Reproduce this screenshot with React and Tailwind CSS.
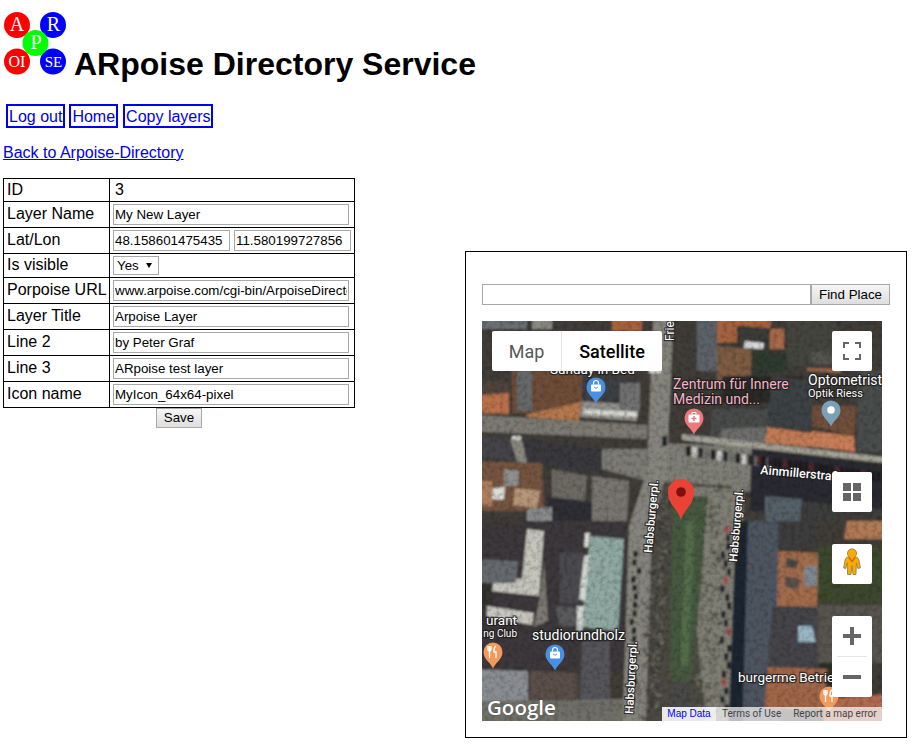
const rows = [
  ['Layer Name', 'My New Layer', 'h-[26px]'],
];

const textRows = [
  ['Porpoise URL', 'www.arpoise.com/cgi-bin/ArpoiseDirectory/arpoise'],
  ['Layer Title', 'Arpoise Layer'],
  ['Line 2', 'by Peter Graf'],
  ['Line 3', 'ARpoise test layer'],
  ['Icon name', 'MyIcon_64x64-pixel'],
];

const Logo = () => (
  <svg width="70" height="76" viewBox="0 0 70 76" className="shrink-0" fontFamily="'Liberation Serif', serif" fill="#fff" textAnchor="middle">
    <circle cx="17" cy="25" r="13" fill="#ff0000" />
    <circle cx="53" cy="25" r="13" fill="#0000ff" />
    <circle cx="17" cy="61.5" r="13" fill="#ff0000" />
    <circle cx="53" cy="61.5" r="13" fill="#0000ff" />
    <circle cx="35.5" cy="43" r="13" fill="#00ff00" />
    <text x="17" y="30.5" fontSize="20">A</text>
    <text x="53.5" y="30.5" fontSize="20">R</text>
    <text x="36" y="48.5" fontSize="20">P</text>
    <text x="17" y="67" fontSize="16">OI</text>
    <text x="53.5" y="67" fontSize="15">SE</text>
  </svg>
);

const NavLink = ({ className = '', children }) => (
  <a href="#" className={`block h-[24px] border-2 border-[#0000ee] px-[1px] text-[16px] leading-[22px] whitespace-nowrap text-[#0000ee] ${className}`}>
    {children}
  </a>
);

const Field = ({ value, className = 'w-[236px]' }) => (
  <input
    readOnly
    value={value}
    className={`block h-[21px] border border-[#a9a9a9] bg-white px-[1px] text-[13.33px] text-black outline-none ${className}`}
  />
);

const Label = ({ className = 'pb-[2px]', children }) => (
  <td className={`w-[106px] border border-black pl-[3px] pr-0 pt-0 align-middle text-[16px] leading-[18px] whitespace-nowrap text-black ${className}`}>{children}</td>
);

const Cell = ({ children }) => (
  <td className="border border-black py-0 pl-[3px] pr-[2px] align-middle">{children}</td>
);

// satellite picture, coordinates are map pixels (400x400)
const blocks = [
  ['-20,-20 420,-20 420,420 -20,420', '#3f3d39'],
  ['-20,-20 45,-20 45,8 -20,8', '#6b7075'],
  ['45,-20 130,-20 130,18 45,18', '#3f3d3a'],
  ['130,-20 160,-20 160,10 130,10', '#a8603e'],
  ['50,-20 70,-20 70,8 50,8', '#8b8a80'],
  ['-20,60 27,60 27,75 -20,75', '#4f443c'],
  ['-20,75 27,72 27,93 -20,92', '#b8714c'],
  ['30,48 100,50 100,82 45,92 30,92', '#6e4d38'],
  ['35,50 50,50 50,90 35,90', '#66696a'],
  ['45,93 100,81 97,100 45,96', '#b5784f'],
  ['100,55 157,60 157,80 100,80', '#3d4144'],
  ['100,80 157,84 155,100 98,96', '#8f8f8c'],
  ['102,88 155,91 155,96 102,93', '#d6d6d0'],
  ['138,62 158,62 158,90 138,88', '#70716f'],
  ['-20,93 165,104 165,118 -20,110', '#7b7a72'],
  ['-20,112 28,118 35,140 -20,135', '#45454a'],
  ['28,118 44,120 46,143 36,142', '#8a8a80'],
  ['40,118 120,128 122,152 45,142', '#38383c'],
  ['120,128 165,128 165,160 120,148', '#7c7b74'],
  ['-20,140 60,142 62,190 -20,190', '#75543f'],
  ['22,148 37,150 36,165 22,165', '#8f8f8f'],
  ['33,167 58,170 55,187 31,184', '#b69678'],
  ['11,167 23,166 22,179 10,178', '#dcdcd6'],
  ['-20,160 10,160 10,185 -20,185', '#b08060'],
  ['70,148 105,155 103,180 70,176', '#6d6a64'],
  ['110,155 147,160 145,200 110,200', '#77746e'],
  ['65,176 110,182 110,200 65,200', '#2d2f36'],
  ['45,188 70,186 70,200 45,200', '#888a8c'],
  // top right
  ['215,-20 235,-20 235,50 215,50', '#5b6468'],
  ['235,-20 290,-20 288,20 235,22', '#a5623f'],
  ['255,5 300,8 300,30 255,30', '#3a3a38'],
  ['263,20 282,22 281,28 262,27', '#dcdcdc'],
  ['288,8 302,8 302,28 288,28', '#a86a48'],
  ['235,25 270,28 268,65 235,62', '#7d5b42'],
  ['270,30 305,32 305,50 270,55', '#2f3a2d'],
  ['305,-20 355,-20 355,45 305,45', '#45443f'],
  ['330,30 360,33 360,45 330,42', '#54544f'],
  ['325,47 360,48 358,52 325,50', '#a06848'],
  ['240,55 320,55 320,82 240,82', '#2c2a28'],
  ['230,88 290,88 286,112 228,118', '#4a4c4c'],
  ['240,108 288,106 285,122 236,120', '#6d6e6c'],
  ['290,55 330,60 330,110 285,105', '#3e4244'],
  ['330,85 375,85 372,115 330,105', '#70503a'],
  ['285,106 330,112 326,126 283,122', '#c07a55'],
  ['330,110 372,115 373,131 325,125', '#c77e58'],
  ['375,50 420,50 420,132 375,130', '#4a4d4c'],
  ['170,122 270,125 268,170 165,170', '#7e7e76'],
  ['270,128 420,146 420,195 268,190', '#2b2c30'],
  ['283,175 320,178 318,200 283,200', '#556068'],
  ['320,180 420,190 420,200 320,200', '#3c3c3a'],
  // bottom left
  ['-20,200 146,200 146,350 -20,350', '#3c393b'],
  ['45,208 62,210 57,275 10,270 12,256 40,258', '#c5c5bc'],
  ['-20,238 36,240 34,262 -20,262', '#666a6e'],
  ['-20,262 10,262 10,285 -20,285', '#33302e'],
  ['5,285 52,292 50,304 5,296', '#c8c8c0'],
  ['58,275 62,240 66,300 52,306', '#7d7a72'],
  ['78,232 104,232 104,282 78,282', '#4b4b50'],
  ['73,285 100,287 100,305 78,305', '#5a5a5c'],
  ['108,215 142,218 136,310 100,306', '#8fa9a2'],
  ['102,235 108,234 103,280 97,278', '#d2d6d0'],
  ['103,212 108,212 106,226 102,226', '#e0e0da'],
  ['95,285 102,285 100,310 95,310', '#d2d6d0'],
  ['100,320 128,320 128,382 98,380', '#55545a'],
  ['-20,348 46,350 46,380 -20,380', '#8a8e92'],
  ['48,350 95,352 95,378 48,378', '#5c5048'],
  ['-20,380 146,378 146,420 -20,420', '#6f6f69'],
  // green, trees and the two roads
  ['168,160 250,165 244,420 150,420', '#4c4a43'],
  ['172,-20 192,-20 185,150 170,205 163,420 140,420 147,205 165,150', '#86857d'],
  ['200,165 262,168 254,420 226,420', '#7f7e73'],
  ['190,175 226,175 220,250 210,360 188,360', '#46593f'],
  ['204,200 213,200 206,345 198,345', '#526c49'],
  ['188,362 210,362 210,395 188,395', '#4a4a44'],
  // bottom right
  ['254,200 268,200 262,420 246,420', '#1f2731'],
  ['266,200 298,200 296,420 260,420', '#4d5560'],
  ['296,200 335,200 335,228 296,228', '#3e3d3c'],
  ['296,230 337,232 335,286 295,285', '#a06c4c'],
  ['304,236 316,240 314,248 304,246', '#4a4846'],
  ['303,255 318,258 316,268 303,266', '#58504a'],
  ['322,245 335,245 335,265 322,265', '#7f8890'],
  ['290,286 336,286 336,346 286,346', '#45454a'],
  ['316,305 330,305 334,321 316,321', '#9ab5c4'],
  ['336,225 420,225 420,282 336,282', '#3c4a2d'],
  ['365,200 420,200 420,218 362,218', '#b07a55'],
  ['336,284 420,284 420,342 336,342', '#595550'],
  ['336,342 362,342 362,372 336,372', '#2c3226'],
  ['286,346 345,348 342,388 282,388', '#a0664a'],
  ['342,378 420,372 420,420 342,420', '#b06a50'],
];

// cheap seeded random so the specks stay put between renders
let seed = 7;
const rnd = () => {
  seed = (seed * 16807) % 2147483647;
  return seed / 2147483647;
};

const treeStrokes = Array.from({ length: 520 }, () => {
  const y = 165 + rnd() * 235;
  const left = rnd() > 0.5;
  const x = left ? 172 + rnd() * 20 - (y - 165) * 0.08 : 224 + rnd() * 18 - (y - 165) * 0.04;
  return { x, y, dx: (rnd() - 0.5) * 12, dy: (rnd() - 0.5) * 12, c: rnd() > 0.5 ? '#26211d' : '#8a8a7e' };
});

const cars = [
  ...Array.from({ length: 14 }, (_, i) => ({ x: 204 + i * 6.2, y: 125 + i * 0.9, w: 4.5, h: 10, c: ['#1d1d1f', '#c8c8c8', '#2b2b33', '#6a6a6a'][i % 4] })),
  ...Array.from({ length: 24 }, (_, i) => ({ x: 275 + i * 5.2, y: 135 + i * 0.7, w: 4, h: 9, c: i % 5 === 0 ? '#55272a' : '#1a1b20' })),
  ...Array.from({ length: 22 }, (_, i) => ({ x: 238 + rnd() * 8, y: 205 + i * 8.5, w: 4, h: 7, c: i % 6 === 0 ? '#a84a4a' : '#24242a' })),
  ...Array.from({ length: 18 }, (_, i) => ({ x: 150 + rnd() * 6 - i * 0.3, y: 230 + i * 8.5, w: 4, h: 6, c: '#1f1f24' })),
  { x: 167, y: 46, w: 12, h: 6, c: '#dcdcdc' },
  { x: 180, y: 115, w: 5, h: 10, c: '#22252a' },
  { x: 30, y: 115, w: 9, h: 4, c: '#d0d0c8' },
];

const Pin = ({ x, y, fill, children }) => (
  <g transform={`translate(${x} ${y})`}>
    <path d="M0 16.5C-2 11-9.5 7.5-9.5 0a9.5 9.5 0 0 1 19 0C9.5 7.5 2 11 0 16.5z" fill={fill} />
    {children}
  </g>
);

const ShopGlyph = () => (
  <g>
    <rect x="-5" y="-2.5" width="10" height="7" rx="1" fill="#fff" />
    <path d="M-2.5-2.5v-1.5a2.5 2.5 0 0 1 5 0v1.5" fill="none" stroke="#fff" strokeWidth="1.2" />
    <path d="M-2 0q2 2.5 4 0" fill="none" stroke="#4a90e2" strokeWidth="0.9" />
  </g>
);

const ForkGlyph = () => (
  <path d="M-3.5-6v4.5M-5-6v3.5q0 1.5 1.5 1.5t1.5-1.5V-6M-3.5-1V6M3-6q-2 1-2 5v1h2V6" fill="none" stroke="#fff" strokeWidth="1.3" />
);

const Label2 = ({ x, y, size = 13, fill = '#fff', weight = 400, rotate, anchor, children }) => (
  <text
    x={x}
    y={y}
    fontSize={size}
    fill={fill}
    fontWeight={weight}
    textAnchor={anchor}
    stroke="#1a1a1a"
    strokeWidth="2.4"
    strokeOpacity="0.75"
    paintOrder="stroke"
    transform={rotate ? `rotate(${rotate} ${x} ${y})` : undefined}
  >
    {children}
  </text>
);

const Satellite = () => (
  <svg width="400" height="400" viewBox="0 0 400 400" className="block" fontFamily="Roboto, sans-serif">
    <defs>
      <filter id="soft">
        <feGaussianBlur stdDeviation="0.9" />
      </filter>
      <filter id="grain" x="0" y="0" width="100%" height="100%">
        <feTurbulence type="fractalNoise" baseFrequency="0.22" numOctaves="3" seed="4" />
        <feColorMatrix values="0 0 0 0 0  0 0 0 0 0  0 0 0 0 0  0 0 0 -2.2 1.3" />
      </filter>
    </defs>
    <g filter="url(#soft)">
      {blocks.map(([points, fill], i) => (
        <polygon key={i} points={points} fill={fill} />
      ))}
      {treeStrokes.map((t, i) => (
        <line key={i} x1={t.x} y1={t.y} x2={t.x + t.dx} y2={t.y + t.dy} stroke={t.c} strokeWidth="0.8" />
      ))}
      {cars.map((c, i) => (
        <rect key={i} x={c.x} y={c.y} width={c.w} height={c.h} fill={c.c} />
      ))}
      <polygon points="200,113 420,138 420,144 200,119" fill="#a3a297" />
    </g>
    <rect width="400" height="400" filter="url(#grain)" opacity="0.2" />

    <Label2 x={68} y={53} size={13.5}>Sunday in Bed</Label2>
    <Label2 x={192} y={20} size={12} rotate={-90}>Frie</Label2>
    <Label2 x={191} y={68} size={14} fill="#f5b5c8">Zentrum für Innere</Label2>
    <Label2 x={191} y={83} size={14} fill="#f5b5c8">Medizin und...</Label2>
    <Label2 x={326} y={63.5} size={14}>Optometrist</Label2>
    <Label2 x={326} y={76} size={11}>Optik Riess</Label2>
    <Label2 x={278} y={153} size={12.5} weight={500} rotate={5}>Ainmillerstraße</Label2>
    <Label2 x={170} y={232} size={11.5} weight={500} rotate={-85}>Habsburgerpl.</Label2>
    <Label2 x={255} y={241} size={11.5} weight={500} rotate={-85}>Habsburgerpl.</Label2>
    <Label2 x={151} y={393} size={11.5} weight={500} rotate={-87}>Habsburgerpl.</Label2>
    <Label2 x={35} y={304} size={13.5} anchor="end">urant</Label2>
    <Label2 x={35} y={316} size={10} anchor="end">ng Club</Label2>
    <Label2 x={50} y={319} size={14}>studiorundholz</Label2>
    <Label2 x={256} y={361} size={13.5}>burgerme Betrieb</Label2>

    <Pin x={114} y={66} fill="#4a90e2"><ShopGlyph /></Pin>
    <Pin x={73} y={333} fill="#4a90e2"><ShopGlyph /></Pin>
    <Pin x={212} y={97} fill="#f0787d">
      <rect x="-5.5" y="-3.5" width="11" height="8" rx="1" fill="#fff" />
      <path d="M-2-3.5v-2h4v2" fill="none" stroke="#fff" />
      <path d="M-2.5 .5h5M0-2v5" stroke="#f0787d" strokeWidth="1.5" />
    </Pin>
    <Pin x={349} y={89} fill="#7ba0b5"><circle r="3.8" fill="#fff" /></Pin>
    <Pin x={11} y={331} fill="#f29a5c"><ForkGlyph /></Pin>
    <Pin x={347} y={375} fill="#f29a5c"><ForkGlyph /></Pin>

    {/* marker */}
    <path d="M199 199C196 188 186 184 186 171a13 13 0 0 1 26 0C212 184 202 188 199 199z" fill="#ea4335" />
    <circle cx="199" cy="171" r="4.8" fill="#7e0f10" />

    <text x="5" y="394" fontSize="20.5" fontWeight="600" fontFamily="'Open Sans', sans-serif" fill="#fff" stroke="#333" strokeOpacity="0.3" strokeWidth="1" paintOrder="stroke">Google</text>
  </svg>
);

const Control = ({ className, children }) => (
  <div className={`absolute left-[350px] flex w-[40px] items-center justify-center rounded-[2px] bg-white ${className}`}>{children}</div>
);

const MapView = () => (
  <div className="relative h-[400px] w-[400px] overflow-hidden font-['Roboto',sans-serif]">
    <Satellite />

    <div className="absolute left-[10px] top-[10px] flex h-[40px] w-[170px] items-center rounded-[2px] bg-white text-[18px]">
      <div className="flex h-full w-[70px] items-center justify-center border-r border-[#e6e6e6] text-[#565656]">Map</div>
      <div className="flex h-full flex-1 items-center justify-center font-medium text-black">Satellite</div>
    </div>

    <Control className="top-[10px] h-[40px]">
      <svg width="18" height="18" viewBox="0 0 18 18" fill="none" stroke="#666" strokeWidth="2">
        <path d="M1 6V1h5M12 1h5v5M17 12v5h-5M6 17H1v-5" />
      </svg>
    </Control>

    <Control className="top-[151px] h-[40px]">
      <svg width="18" height="18" viewBox="0 0 18 18" fill="#666">
        <rect x="0" y="0" width="8" height="8" />
        <rect x="10" y="0" width="8" height="8" />
        <rect x="0" y="10" width="8" height="8" />
        <rect x="10" y="10" width="8" height="8" />
      </svg>
    </Control>

    <Control className="top-[223px] h-[40px]">
      <svg width="18" height="32" viewBox="0 0 18 32">
        <path d="M9 .8a4.6 4.6 0 0 1 3.2 7.9c2.3.4 3.4 1.6 3.8 3.6l1.4 7.6-2.6.6-1.4-5.6-.4 11.600H10l-1-9-1 9H4.600l-.4-11.600-1.400 5.600-2.200-.6 1.400-7.600c.4-2 1.500-3.200 3.800-3.600A4.600 4.600 0 0 1 9 .8z" fill="#f9ab00" stroke="#8c7a4a" strokeWidth="0.8" />
        <path d="M5.800 9.200 9 13.500l3.200-4.300" fill="none" stroke="#d9641e" strokeWidth="1.600" />
      </svg>
    </Control>

    <div className="absolute left-[350px] top-[295px] flex h-[81px] w-[40px] flex-col items-center rounded-[2px] bg-white">
      <div className="flex h-[40px] items-center justify-center">
        <svg width="18" height="18" viewBox="0 0 18 18" fill="#666">
          <path d="M7 0h4v7h7v4h-7v7H7v-7H0V7h7z" />
        </svg>
      </div>
      <div className="h-px w-[30px] bg-[#e6e6e6]" />
      <div className="flex h-[40px] items-center justify-center">
        <svg width="18" height="4" viewBox="0 0 18 4" fill="#666">
          <rect width="18" height="4" />
        </svg>
      </div>
    </div>

    <div className="absolute bottom-0 right-0 flex h-[14px] w-[220px] items-center bg-white/70 text-[10px] leading-none text-[#444]">
      <span className="flex h-full w-[54px] items-center justify-center bg-white/60 font-['Liberation_Sans',sans-serif] text-[#0000ff]">Map Data</span>
      <span className="ml-[6px]">Terms of Use</span>
      <span className="ml-[12px]">Report a map error</span>
    </div>
  </div>
);

export default function App() {
  return (
    <div className="flex min-h-[753px] items-start bg-white font-['Liberation_Sans',sans-serif] text-black">
      <div className="w-[465px] shrink-0">
        <div className="flex h-[76px] items-end">
          <Logo />
          <h1 className="-mb-[7px] ml-[4px] text-[32px] font-bold leading-[37px] whitespace-nowrap">ARpoise Directory Service</h1>
        </div>

        <div className="ml-[6px] mt-[28px] flex gap-[4px]">
          <NavLink>Log out</NavLink>
          <NavLink>Home</NavLink>
          <NavLink className="ml-px w-[90px]">Copy layers</NavLink>
        </div>

        <div className="ml-[3px] mt-[15px] text-[16px] leading-[20px]">
          <a href="#" className="text-[#0000ee] underline">Back to Arpoise-Directory</a>
        </div>

        <table className="ml-[3px] mt-[15px] w-[352px] table-fixed border-collapse">
          <tbody>
            <tr className="h-[23px]">
              <Label className="pb-0">ID</Label>
              <td className="border border-black py-0 pl-[5px] pr-[3px] text-[16px] leading-[18px]">3</td>
            </tr>
            {rows.map(([label, value, height]) => (
              <tr key={label} className={height}>
                <Label>{label}</Label>
                <Cell><Field value={value} /></Cell>
              </tr>
            ))}
            <tr className="h-[26px]">
              <Label>Lat/Lon</Label>
              <Cell>
                <div className="flex gap-[4px]">
                  <Field value="48.158601475435" className="w-[117px]" />
                  <Field value="11.580199727856" className="w-[117px]" />
                </div>
              </Cell>
            </tr>
            <tr className="h-[24px]">
              <Label>Is visible</Label>
              <Cell>
                <div className="relative h-[19px] w-[46px]">
                  <select className="block h-full w-full appearance-none border border-[#a9a9a9] bg-white pl-[3px] text-[13.33px] leading-none outline-none">
                    <option>Yes</option>
                    <option>No</option>
                  </select>
                  <svg width="6" height="5" viewBox="0 0 6 5" className="absolute right-[7px] top-[7px]">
                    <path d="M0 0h6L3 5z" fill="#000" />
                  </svg>
                </div>
              </Cell>
            </tr>
            {textRows.map(([label, value]) => (
              <tr key={label} className="h-[26px]">
                <Label>{label}</Label>
                <Cell><Field value={value} /></Cell>
              </tr>
            ))}
          </tbody>
        </table>

        <div className="ml-[3px] flex w-[352px] justify-center">
          <button className="h-[20px] w-[46px] border border-[#a9a9a9] bg-linear-to-b from-[#f6f6f6] to-[#dedede] text-[13.33px] leading-none text-black">
            Save
          </button>
        </div>
      </div>

      <div className="mt-[251px] h-[487px] w-[442px] shrink-0 border border-black pl-[16px] pt-[32px]">
        <div className="flex">
          <input readOnly className="block h-[21px] w-[329px] border border-[#a9a9a9] bg-white outline-none" />
          <button className="h-[21px] w-[79px] border border-[#a9a9a9] bg-linear-to-b from-[#f6f6f6] to-[#dedede] text-[13.33px] leading-none text-black">
            Find Place
          </button>
        </div>
        <div className="mt-[16px]">
          <MapView />
        </div>
      </div>
    </div>
  );
}
